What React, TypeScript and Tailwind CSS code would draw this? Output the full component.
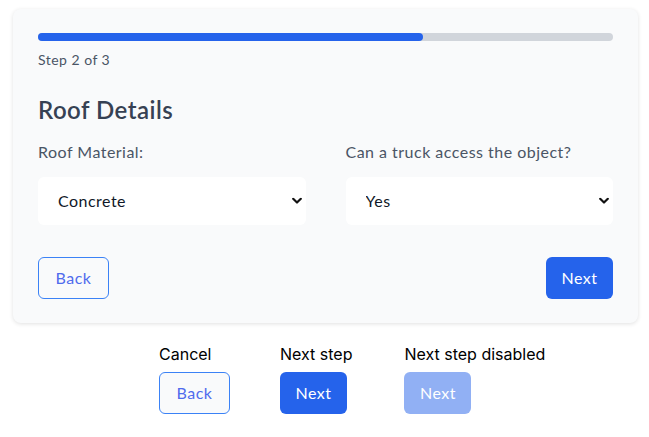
import React from "react";

const F = { fontFamily: "Lato, 'Open Sans', sans-serif", letterSpacing: "0.03em" };
const I = { fontFamily: "Inter, sans-serif", letterSpacing: "0" };

function Chevron() {
  return (
    <svg width="10" height="7" viewBox="0 0 10 7" className="pointer-events-none absolute right-[4px] top-1/2 -translate-y-1/2">
      <path d="M1.2 1.3 L5 5 L8.8 1.3" fill="none" stroke="#111" strokeWidth="2.2" strokeLinecap="round" strokeLinejoin="round" />
    </svg>
  );
}

function Field({ label, value, options }: { label: string; value: string; options: string[] }) {
  return (
    <div className="flex flex-col">
      <label className="text-base leading-6 text-gray-600">{label}</label>
      <div className="relative mt-[13px]">
        <select
          defaultValue={value}
          className="h-12 w-full appearance-none rounded-md bg-white pl-5 pr-8 text-base text-gray-900 outline-none"
          style={F}
        >
          {options.map((o) => (
            <option key={o}>{o}</option>
          ))}
        </select>
        <Chevron />
      </div>
    </div>
  );
}

export default function App() {
  return (
    <div className="min-h-[437px] w-[649px] bg-white pl-[13px] pr-[11px] pt-[9px]" style={F}>
      <div className="rounded-lg bg-gray-50 px-[25px] pt-6 pb-6 shadow-[0_1px_4px_rgba(0,0,0,0.12)]">
        <div className="h-2 w-full rounded-full bg-[#d1d5db]">
          <div className="h-2 w-[67%] rounded-full bg-[#2563eb]" />
        </div>
        <p className="mt-[9px] text-sm leading-5 text-gray-600">Step 2 of 3</p>
        <h2 className="mt-6 text-2xl leading-8 font-semibold text-gray-700">Roof Details</h2>
        <div className="mt-[14px] grid grid-cols-2 gap-10">
          <Field label="Roof Material:" value="Concrete" options={["Concrete", "Metal", "Tile", "Wood"]} />
          <Field label="Can a truck access the object?" value="Yes" options={["Yes", "No"]} />
        </div>
        <div className="mt-8 flex justify-between">
          <button className="h-[42px] w-[71px] rounded-md border border-[#3b82f6] text-base text-[#4f6bed]">Back</button>
          <button className="h-[42px] w-[67px] rounded-md bg-[#2563eb] text-base text-white">Next</button>
        </div>
      </div>
      <div className="mt-[19px] flex pl-[146px]">
        <div className="flex flex-col items-start gap-1.5">
          <span className="text-base leading-6 text-black" style={I}>Cancel</span>
          <button className="h-[42px] w-[71px] rounded-md border border-[#3b82f6] bg-gray-50 text-base text-[#4f6bed]">Back</button>
        </div>
        <div className="ml-[50px] flex flex-col items-start gap-1.5">
          <span className="text-base leading-6 text-black" style={I}>Next step</span>
          <button className="h-[42px] w-[67px] rounded-md bg-[#2563eb] text-base text-white">Next</button>
        </div>
        <div className="ml-[52px] flex flex-col items-start gap-1.5">
          <span className="text-base leading-6 text-black" style={I}>Next step disabled</span>
          <button disabled className="h-[42px] w-[67px] rounded-md bg-[#2563eb] text-base text-white opacity-50">Next</button>
        </div>
      </div>
    </div>
  );
}
